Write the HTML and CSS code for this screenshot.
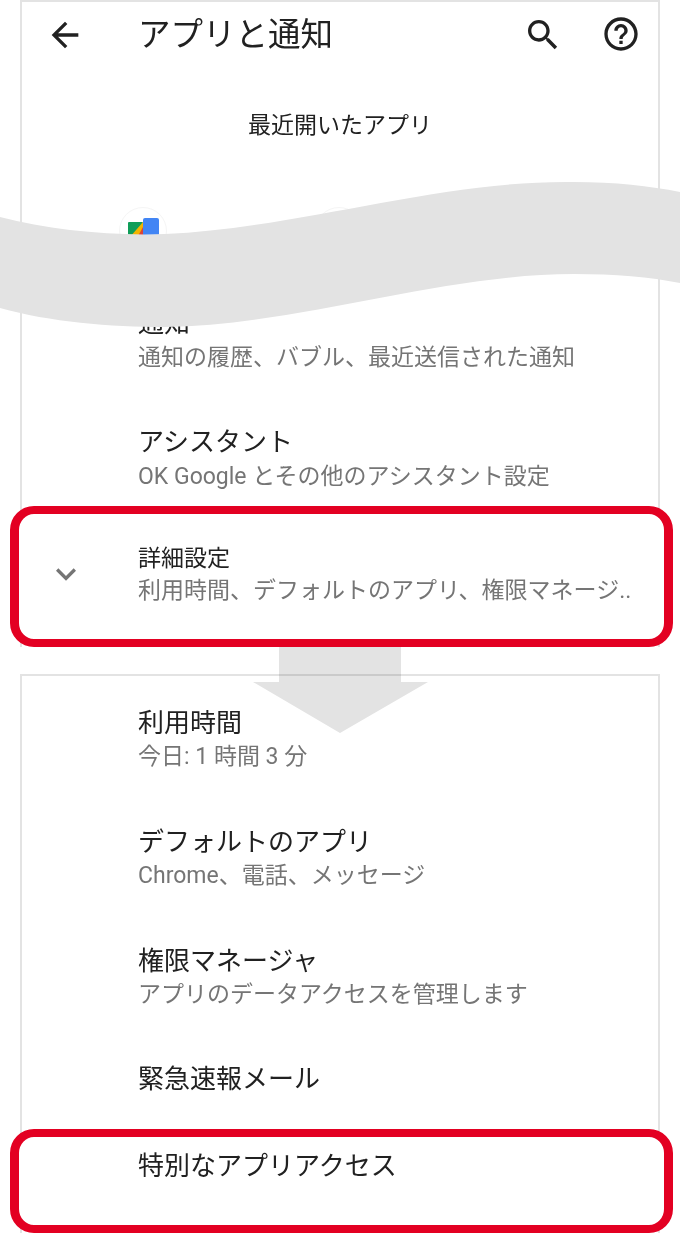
FILE: index.html
```html
<!DOCTYPE html>
<html lang="ja">
<head>
    <meta charset="UTF-8">
    <meta name="viewport" content="width=device-width, initial-scale=1.0">
    <title>アプリと通知</title>
    <link rel="stylesheet" href="styles.css">
</head>
<body>
  <div class="page">
    <!-- top half of the settings screen -->
    <div class="panel panelTop">
      <div class="appBar">
        <svg class="icon backIcon" viewBox="0 0 24 24"><path d="M20 11H7.83l5.59-5.59L12 4l-8 8 8 8 1.41-1.41L7.83 13H20v-2z"/></svg>
        <h1 class="appBarTitle">アプリと通知</h1>
        <svg class="icon searchIcon" viewBox="0 0 24 24"><path d="M15.5 14h-.79l-.28-.27C15.41 12.59 16 11.11 16 9.5 16 5.91 13.09 3 9.5 3S3 5.91 3 9.5 5.91 16 9.5 16c1.61 0 3.09-.59 4.23-1.57l.27.28v.79l5 4.99L20.49 19l-4.99-5zm-6 0C7.01 14 5 11.99 5 9.5S7.01 5 9.5 5 14 7.01 14 9.5 11.99 14 9.5 14z"/></svg>
        <svg class="icon helpIcon" viewBox="0 0 24 24"><path d="M11 18h2v-2h-2v2zm1-16C6.48 2 2 6.48 2 12s4.48 10 10 10 10-4.48 10-10S17.52 2 12 2zm0 18c-4.41 0-8-3.59-8-8s3.59-8 8-8 8 3.59 8 8-3.59 8-8 8zm0-14c-2.21 0-4 1.79-4 4h2c0-1.1.9-2 2-2s2 .9 2 2c0 2-3 1.75-3 5h2c0-2.25 3-2.5 3-5 0-2.21-1.79-4-4-4z"/></svg>
      </div>
      <h2 class="sectionTitle">最近開いたアプリ</h2>
      <div class="recentApps">
        <div class="appCell">
          <div class="appCircle">
            <svg class="appIcon" viewBox="0 0 32 34">
              <rect x="16" y="1" width="16" height="32" rx="2" fill="#4285f4"/>
              <polygon points="16,5 16,30 5,30" fill="#db4437"/>
              <rect x="1" y="5" width="15" height="25" rx="1" fill="#0f9d58"/>
              <polygon points="16,5 16,18 8,24 3,20" fill="#f4b400"/>
              <polygon points="16,10 16,30 5,30" fill="#db4437"/>
            </svg>
          </div>
        </div>
        <div class="appCell"><div class="appCircle"></div></div>
        <div class="appCell"><div class="appCircle"></div></div>
      </div>
      <div class="row">
        <div class="rowTitle">通知</div>
        <div class="rowSub">通知の履歴、バブル、最近送信された通知</div>
      </div>
      <div class="row">
        <div class="rowTitle">アシスタント</div>
        <div class="rowSub">OK Google とその他のアシスタント設定</div>
      </div>
      <div class="row highlight highlightAdvanced">
        <svg class="icon chevronIcon" viewBox="0 0 24 24"><path d="M16.59 8.59L12 13.17 7.41 8.59 6 10l6 6 6-6z"/></svg>
        <div class="rowTitle small">詳細設定</div>
        <div class="rowSub">利用時間、デフォルトのアプリ、権限マネージ..</div>
      </div>
    </div>

    <!-- expanded list -->
    <div class="panel panelBottom">
      <div class="row">
        <div class="rowTitle">利用時間</div>
        <div class="rowSub">今日: 1 時間 3 分</div>
      </div>
      <div class="row">
        <div class="rowTitle">デフォルトのアプリ</div>
        <div class="rowSub">Chrome、電話、メッセージ</div>
      </div>
      <div class="row">
        <div class="rowTitle">権限マネージャ</div>
        <div class="rowSub">アプリのデータアクセスを管理します</div>
      </div>
      <div class="row single">
        <div class="rowTitle">緊急速報メール</div>
      </div>
      <div class="row highlight highlightSpecial">
        <div class="rowTitle">特別なアプリアクセス</div>
      </div>
    </div>

    <!--* decorations lying over the screens -->
    <svg class="wave" viewBox="0 0 680 340">
      <path d="M0 217C50 230 110 236 165 234C300 228 440 180 574 182C615 182 650 186 680 192L680 283C650 277 615 274 574 274C440 274 300 325 165 327C110 327 50 322 0 308Z"/>
    </svg>
    <svg class="downArrow" viewBox="0 0 175 86">
      <polygon points="26,0 148,0 148,35 175,35 87,86 0,35 26,35"/>
    </svg>
  </div>
</body>
</html>
```

FILE: styles.css
```css
:root {
    --line-color: #e3e3e3;
    --title-color: #212121;
    --sub-color: #757575;
    --frame-color: #e30022;
}
* {
    box-sizing: border-box;
}
body {
    margin: 0;
    font-family: Roboto, "Noto Sans CJK JP", sans-serif;
    color: var(--title-color);
    background-color: #fff;
}
.page {
    position: relative;
    width: 680px;
    height: 1234px;
    overflow: hidden;
}
.panel {
    margin: 0 20px;
    border: 2px solid var(--line-color);
    border-bottom: none;
}
.panelBottom {
    margin-top: 27px;
    padding-top: 4px;
}
.appBar {
    display: flex;
    align-items: center;
    height: 66px;
    position: relative;
}
.appBarTitle {
    margin: 0 0 0 116px;
    font-size: 32.5px;
    font-weight: 400;
    line-height: 66px;
}
.icon {
    display: block;
    width: 40px;
    height: 40px;
    flex: none;
    fill: var(--title-color);
}
.backIcon {
    position: absolute;
    left: 23px;
    top: 13px;
}
.searchIcon {
    position: absolute;
    left: 501px;
    top: 13px;
}
.helpIcon {
    position: absolute;
    left: 579px;
    top: 12px;
}
.sectionTitle {
    margin: 0;
    padding-top: 41px;
    font-size: 23px;
    font-weight: 400;
    line-height: 34px;
    text-align: center;
}
.recentApps {
    display: flex;
    height: 137px;
    padding: 64px 0 0 23px;
}
.appCell {
    display: flex;
    justify-content: center;
    width: 196px;
}
.appCircle {
    display: flex;
    align-items: flex-start;
    justify-content: center;
    width: 48px;
    height: 48px;
    padding-top: 9px;
    border: 1px solid #f5f5f5;
    border-radius: 50%;
}
.appIcon {
    width: 32px;
    height: 34px;
}
.row {
    position: relative;
    padding: 26px 0 25px 116px;
}
.row.single {
    height: 92px;
    padding-top: 25px;
}
.rowTitle {
    font-size: 26px;
    line-height: 34px;
}
.rowTitle.small {
    font-size: 23px;
    line-height: 32px;
}
.rowSub {
    font-size: 23px;
    line-height: 34px;
    color: var(--sub-color);
    white-space: nowrap;
}
.panelTop .row:not(.highlight) .rowSub {
    position: relative;
    top: 1px;
}
.highlight {
    margin: 0 -15px 0 -12px;
    border: 9px solid var(--frame-color);
    border-top-width: 8px;
    border-bottom-width: 8px;
    border-radius: 24px;
    padding-left: 119px;
    background-color: #fff;
}
.highlightAdvanced {
    margin-top: -12px;
    padding-top: 29px;
    padding-bottom: 32px;
}
.highlightAdvanced .rowSub {
    line-height: 32px;
}
.highlightSpecial {
    padding-top: 12px;
    padding-bottom: 42px;
}
.chevronIcon {
    position: absolute;
    left: 27px;
    top: 40px;
    fill: var(--sub-color);
}
.wave {
    position: absolute;
    left: 0;
    top: 0;
    width: 680px;
    height: 340px;
    fill: var(--line-color);
}
.downArrow {
    position: absolute;
    left: 253px;
    top: 647px;
    width: 175px;
    height: 86px;
    fill: var(--line-color);
    mix-blend-mode: multiply;
}
```
